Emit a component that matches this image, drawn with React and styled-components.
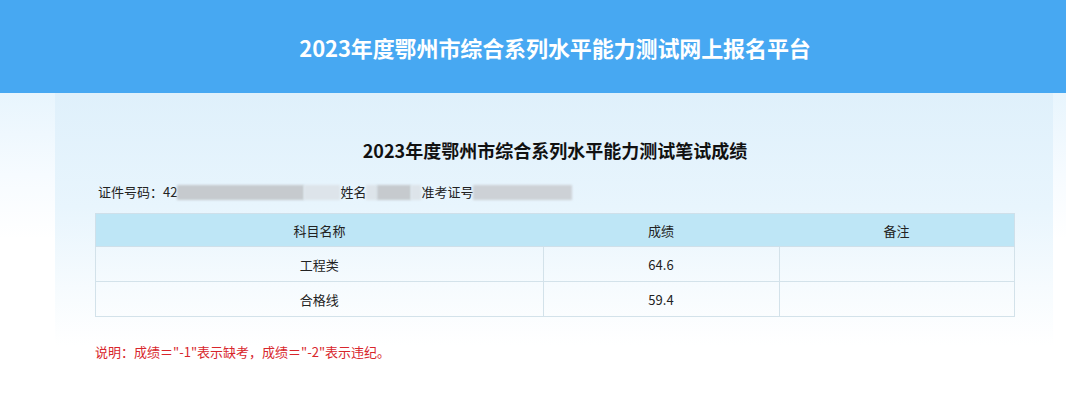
import React from "react";
import styled, { createGlobalStyle } from "styled-components";

const GlobalStyle = createGlobalStyle`
  html, body {
    margin: 0;
    padding: 0;
    background: #ffffff;
  }
  body {
    font-family: "Noto Sans CJK SC", "Microsoft YaHei", "Liberation Sans", sans-serif;
    color: #222;
  }
`;

const scores = [
  { name: "工程类", score: "64.6", note: "" },
  { name: "合格线", score: "59.4", note: "" },
];

const App = () => {
  return (
    <Page>
      <GlobalStyle />
      <Header>
        <HeaderTitle>2023年度鄂州市综合系列水平能力测试网上报名平台</HeaderTitle>
      </Header>

      <Main>
        <Panel>
          <Subtitle>2023年度鄂州市综合系列水平能力测试笔试成绩</Subtitle>

          <InfoRow>
            <InfoText>证件号码：42</InfoText>
            <Redact width={127} shade="dark" />
            <Redact width={36} shade="light" />
            <InfoText>姓名</InfoText>
            <Redact width={11} shade="light" />
            <Redact width={34} shade="dark" />
            <Redact width={10} shade="light" />
            <InfoText>准考证号</InfoText>
            <Redact width={99} shade="mid" />
          </InfoRow>

          <ScoreTable>
            <thead>
              <tr>
                <HeadCell width={447}>科目名称</HeadCell>
                <HeadCell width={236}>成绩</HeadCell>
                <HeadCell>备注</HeadCell>
              </tr>
            </thead>
            <tbody>
              {scores.map((row) => (
                <tr key={row.name}>
                  <Cell>{row.name}</Cell>
                  <Cell>{row.score}</Cell>
                  <Cell>{row.note}</Cell>
                </tr>
              ))}
            </tbody>
          </ScoreTable>

          <Note>说明：成绩＝"-1"表示缺考，成绩＝"-2"表示违纪。</Note>
        </Panel>
      </Main>
    </Page>
  );
};

export default App;

const Page = styled.div`
  width: 100%;
  min-height: 417px;
  overflow: hidden;
`;

const Header = styled.header`
  height: 93px;
  background-color: #47a8f2;
  display: flex;
  align-items: center;
  justify-content: center;
  padding-left: 44px;
  box-sizing: border-box;
`;

const HeaderTitle = styled.h1`
  margin: 0;
  font-size: 22px;
  font-weight: 700;
  color: #ffffff;
  letter-spacing: -0.1px;
`;

const Main = styled.main`
  background: linear-gradient(180deg, #e8f5fd 0%, #f6fbff 25%, #ffffff 45%);
  padding: 0 13px 0 55px;
  min-height: 324px;
`;

const Panel = styled.section`
  background: linear-gradient(180deg, #dff0fb 0%, #e8f5fd 35%, #f6fbfe 60%, #ffffff 78%);
  padding: 45px 38px 40px 40px;
  min-height: 324px;
  box-sizing: border-box;
`;

const Subtitle = styled.h2`
  margin: 0;
  text-align: center;
  font-size: 18px;
  line-height: 24px;
  font-weight: 700;
  color: #111;
`;

const InfoRow = styled.div`
  display: flex;
  align-items: center;
  height: 20px;
  margin-top: 20px;
  padding-left: 3px;
`;

const InfoText = styled.span`
  font-size: 13px;
  line-height: 20px;
  color: #222;
  white-space: nowrap;
`;

const shades = {
  dark: "#c6cace",
  mid: "#cdd1d6",
  light: "#dde4ea",
};

const Redact = styled.span`
  display: inline-block;
  width: ${({ width }) => width}px;
  height: 15px;
  background-color: ${({ shade }) => shades[shade]};
  filter: blur(1px);
`;

const ScoreTable = styled.table`
  width: 920px;
  margin-top: 11px;
  border-collapse: collapse;
  border: 1px solid #cfe0ea;
  font-size: 13px;
  color: #222;
`;

const HeadCell = styled.th`
  height: 32px;
  padding: 0;
  width: ${({ width }) => (width ? `${width}px` : "auto")};
  background-color: #bee6f6;
  font-weight: 400;
  text-align: center;
  border-bottom: 1px solid #cfe0ea;
`;

const Cell = styled.td`
  height: 34px;
  padding: 0;
  text-align: center;
  border: 1px solid #d3e2ea;
`;

const Note = styled.p`
  margin: 25px 0 0;
  font-size: 13px;
  line-height: 20px;
  color: #d8262c;
`;
